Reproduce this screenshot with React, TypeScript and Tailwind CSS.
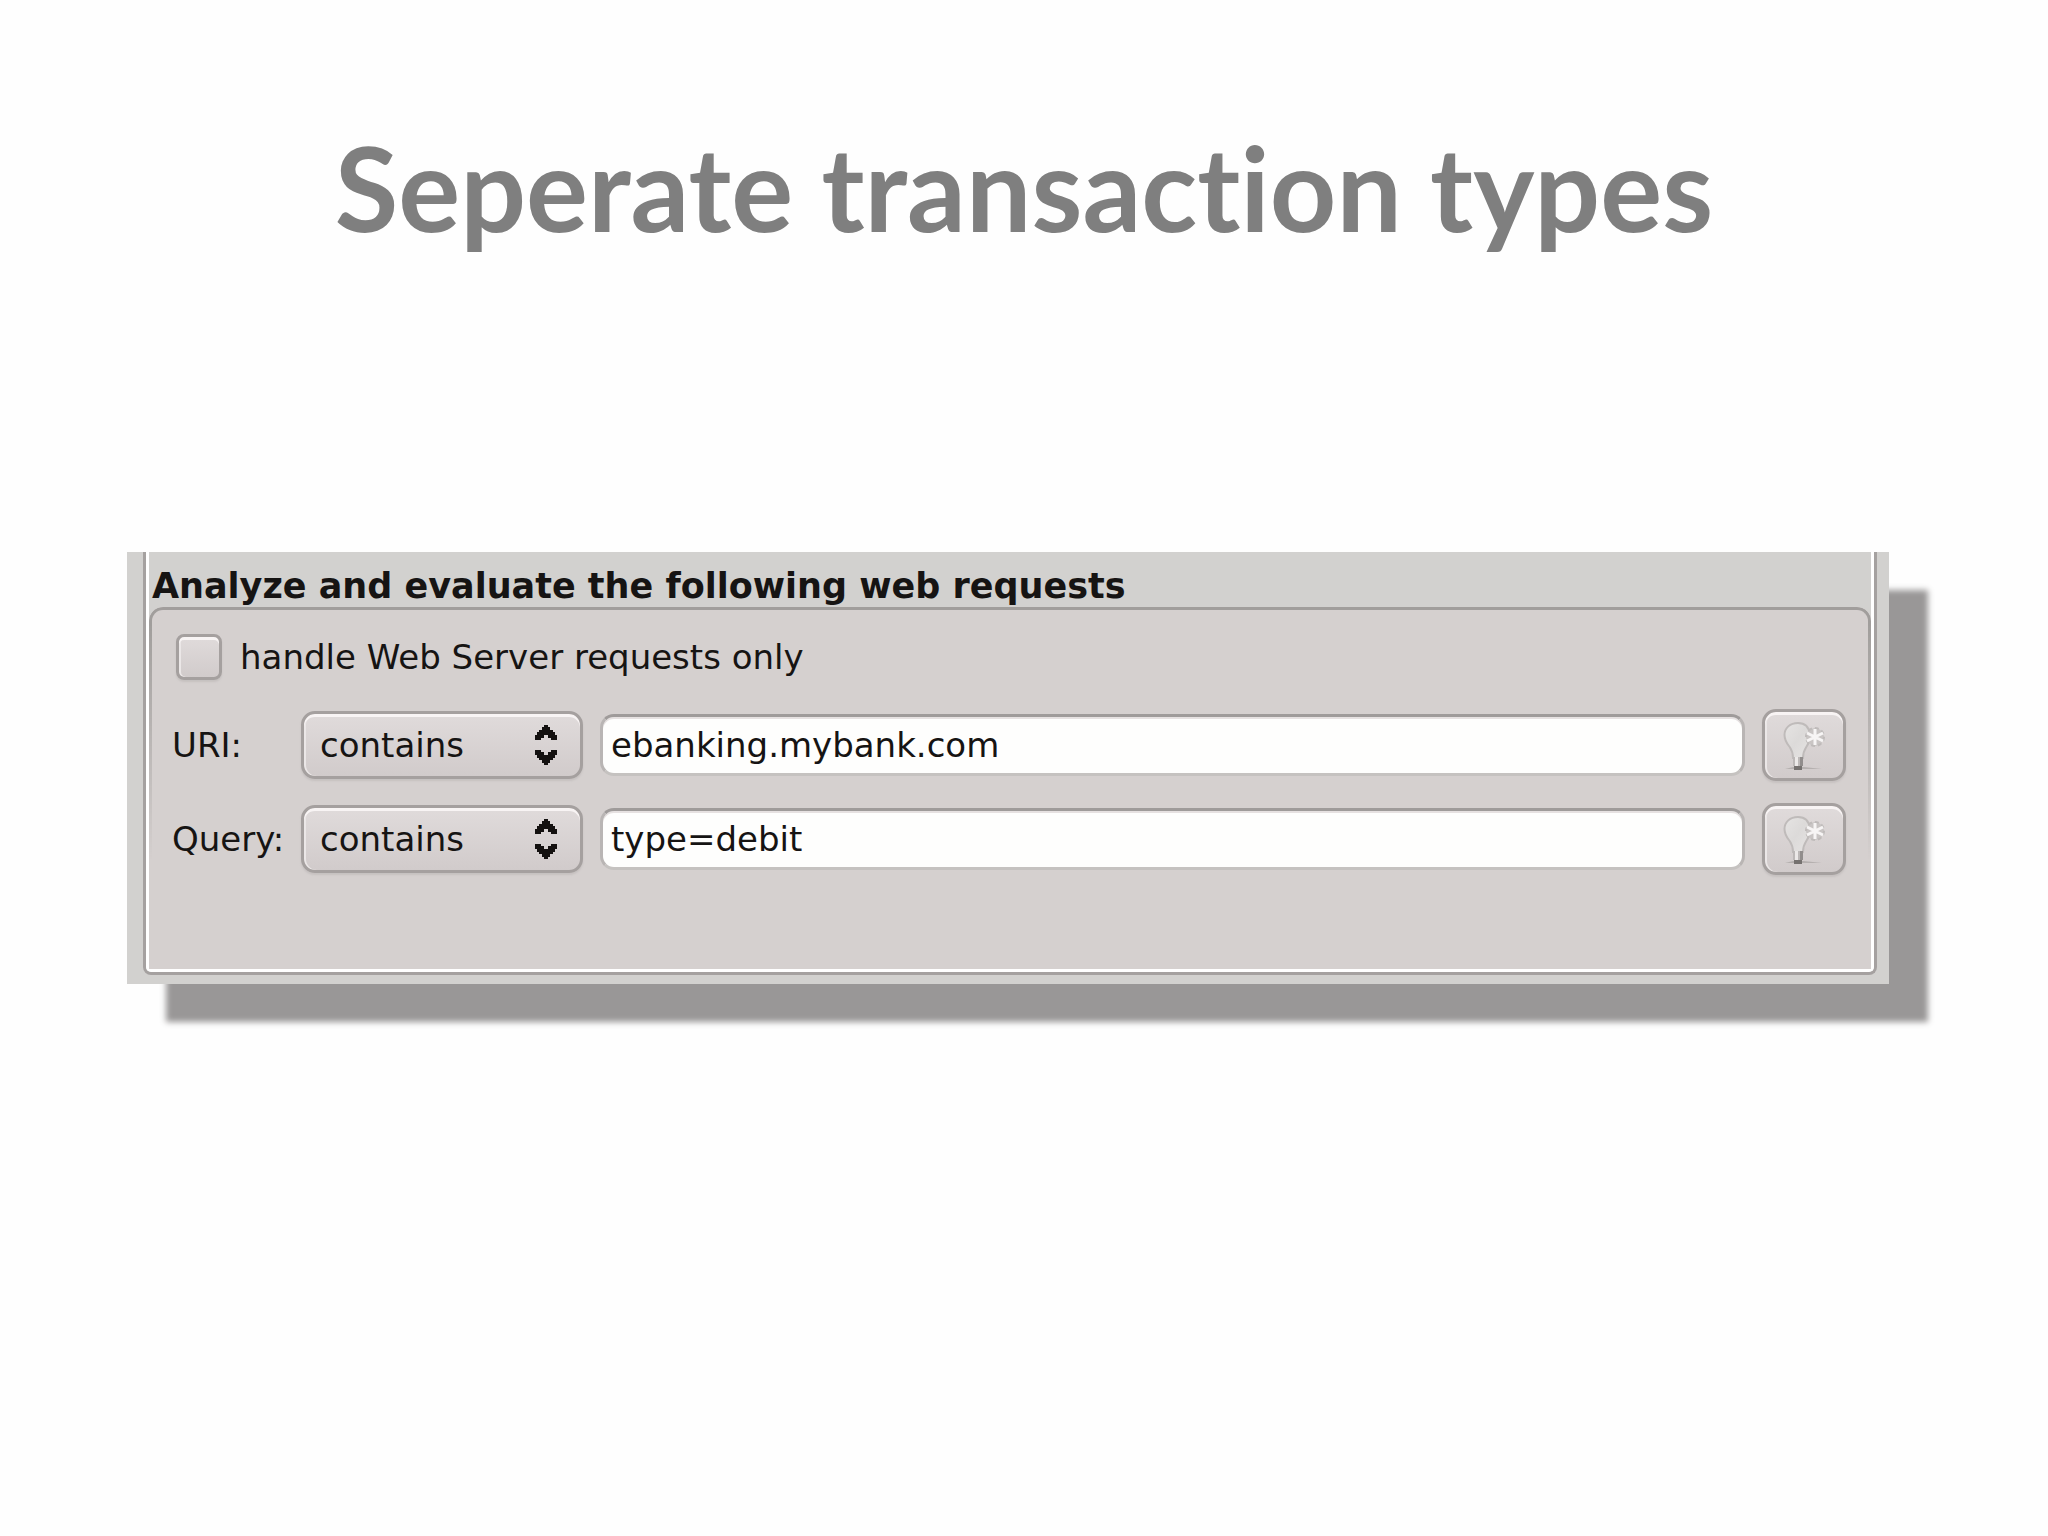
import React from 'react';

interface FilterRowProps {
  id: string;
  label: string;
  value: string;
}

const fieldText = "font-['DejaVu_Sans',sans-serif] text-[34px] leading-[42px] text-[#161413]";

const raised =
  'border-[3px] border-[#a5a09f] bg-linear-to-b from-[#e0dbdb] to-[#d1cbcb] shadow-[inset_0_3px_0_#f8f4f4,inset_2px_0_0_#ebe7e7,0_2px_2px_#c6c1c0]';

const SortArrows = () => (
  <svg viewBox="0 0 22 40" className="w-[22px] h-10 absolute right-[26px] top-3.5 pointer-events-none" fill="#141110" aria-hidden="true">
    <path d="M9 0h4v2h2v3h3v2h2v3h2v5h-6v-2h-3v-3h-4v3h-3v2h-6v-5h2v-3h2v-2h3v-3h2z" />
    <path d="M9 40h4v-2h2v-3h3v-2h2v-3h2v-5h-6v2h-3v3h-4v-3h-3v-2h-6v5h2v3h2v2h3v3h2z" />
  </svg>
);

const BulbIcon = () => (
  <svg viewBox="0 0 48 52" className="w-12 h-[52px]" fill="none" aria-hidden="true">
    <defs>
      <linearGradient id="glass" x1="0" y1="0" x2="1" y2="1">
        <stop offset="0" stopColor="#e6e4e3" />
        <stop offset="0.5" stopColor="#dcdad9" />
        <stop offset="1" stopColor="#e6e4e3" />
      </linearGradient>
    </defs>
    <path d="M5 50 L13 48 H24 L42 50 Z" fill="#b5b0af" />
    <path
      d="M18 4 C10 4 4.500 9 4.500 16 C4.500 22 7.500 25 10 28.500 C12 31.500 13 35 13 39 H23 C23 35 24 31.500 26 28.500 C28.500 25 30 21 29.500 15 C29 8 25 4 18 4 Z"
      fill="url(#glass)"
      stroke="#bfbbba"
      strokeWidth="2"
    />
    <rect x="13" y="38" width="10" height="9" fill="#bcb8b7" />
    <rect x="15" y="38" width="3" height="9" fill="#ece9e8" />
    <rect x="20" y="38" width="3" height="9" fill="#918d8c" />
    <rect x="14" y="47" width="8" height="4" fill="#75716f" />
    <circle cx="35" cy="18" r="9" fill="#c9c5c4" stroke="#bfbbba" strokeWidth="2" strokeDasharray="4 3" />
    <path d="M35 10 V26 M27 14 L43 22 M43 14 L27 22" stroke="#f7f5f5" strokeWidth="3" />
  </svg>
);

const FilterRow: React.FC<FilterRowProps> = ({ id, label, value }) => (
  <div className="grid grid-cols-[129px_282px_1fr_84px] items-center">
    <label htmlFor={id} className={`${fieldText} whitespace-nowrap`}>{label}</label>
    <div className="relative">
      <select
        aria-label={`${label} match type`}
        defaultValue="contains"
        className={`${fieldText} ${raised} appearance-none block w-full h-[68px] pl-4 rounded-[14px]`}
      >
        <option value="contains">contains</option>
      </select>
      <SortArrows />
    </div>
    <div className="px-[17px]">
      <input
        id={id}
        type="text"
        defaultValue={value}
        className={`${fieldText} block w-full h-[62px] pl-2 bg-[#fefefd] border-[3px] border-t-[#9f9b9a] border-x-[#b9b5b4] border-b-[#c5c2c0] rounded-[14px] shadow-[inset_0_2px_0_#e6e1e1]`}
      />
    </div>
    <button type="button" aria-label={`Suggest ${label}`} className={`${raised} h-[72px] rounded-[14px] flex items-center justify-center`}>
      <BulbIcon />
    </button>
  </div>
);

const filters = [
  { id: 'uri', label: 'URI:', value: 'ebanking.mybank.com' },
  { id: 'query', label: 'Query:', value: 'type=debit' },
];

const App: React.FC = () => {
  return (
    <main className="min-h-screen bg-[#fefefe] pt-[116px] pl-[127px] pr-[159px]">
      <h1 className="mb-[292px] pl-8 text-center font-['Lato',sans-serif] font-bold text-[116px] leading-[144px] [font-variant-ligatures:none] text-[#7f7f7f]">
        Seperate transaction types
      </h1>

      <section className="bg-[#d2d1cf] pl-4 pr-3 pb-[9px] shadow-[39px_38px_6px_#999797]">
        <div className="border-x-[3px] border-b-[3px] border-[#a5a1a0] rounded-b-lg">
          <div className="border-x-[3px] border-b-[3px] border-white rounded-b-[5px]">
            <h2 className="pt-[13px] pl-[3px] font-['DejaVu_Sans',sans-serif] font-bold text-[35px] leading-[42px] text-[#161413]">
              Analyze and evaluate the following web requests
            </h2>

            <div className="relative bg-[#d5d0cf] rounded-t-[14px] pt-[27px] pl-[23px] pr-[25px] pb-[94px]">
              <div className="absolute inset-0 pointer-events-none rounded-t-[14px] border-t-[3px] border-x-[3px] border-[#a19e9c] [mask-image:linear-gradient(to_bottom,black_5%,transparent_70%)]" />
              <div className="flex items-center gap-[18px] pl-1 mb-[29px]">
                <input id="server-only" type="checkbox" className={`${raised} appearance-none size-[46px] rounded-lg`} />
                <label htmlFor="server-only" className={fieldText}>handle Web Server requests only</label>
              </div>
              <div className="flex flex-col gap-[22px]">
                {filters.map((f) => (
                  <FilterRow key={f.id} {...f} />
                ))}
              </div>
            </div>
          </div>
        </div>
      </section>
    </main>
  );
};

export default App;
